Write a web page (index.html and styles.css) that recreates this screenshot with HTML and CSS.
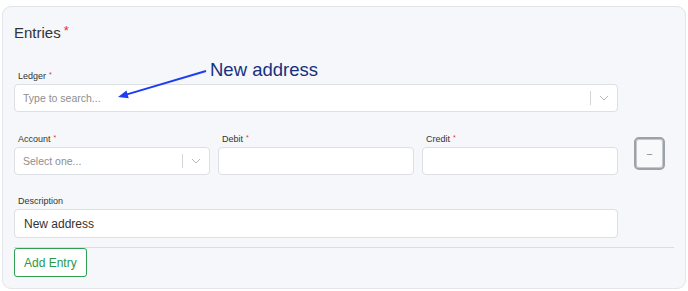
FILE: index.html
```html
<!DOCTYPE html>
<html lang="en">
<head>
    <meta charset="UTF-8">
    <meta name="viewport" content="width=device-width, initial-scale=1.0">
    <title>Entries</title>
    <link rel="stylesheet" href="styles.css">
</head>
<body>
    <div class="card">
        <h2 class="card-title">Entries<span class="req">*</span></h2>

        <div class="field field-wide">
            <label class="field-label">Ledger<span class="req">*</span></label>
            <div class="select">
                <span class="select-value placeholder">Type to search...</span>
                <span class="select-sep"></span>
                <span class="select-arrow">
                    <svg width="10" height="6" viewBox="0 0 10 6"><path d="M1 1l4 4 4-4" fill="none" stroke="#b8b8b8" stroke-width="1"/></svg>
                </span>
            </div>
        </div>

        <div class="entry-row">
            <div class="entry-fields">
                <div class="field">
                    <label class="field-label">Account<span class="req">*</span></label>
                    <div class="select">
                        <span class="select-value placeholder">Select one...</span>
                        <span class="select-sep"></span>
                        <span class="select-arrow">
                            <svg width="10" height="6" viewBox="0 0 10 6"><path d="M1 1l4 4 4-4" fill="none" stroke="#b8b8b8" stroke-width="1"/></svg>
                        </span>
                    </div>
                </div>
                <div class="field">
                    <label class="field-label">Debit<span class="req">*</span></label>
                    <div class="input"></div>
                </div>
                <div class="field">
                    <label class="field-label">Credit<span class="req">*</span></label>
                    <div class="input"></div>
                </div>
            </div>
            <button class="remove-btn" type="button">&minus;</button>
        </div>

        <div class="field field-wide desc">
            <label class="field-label">Description</label>
            <div class="input">New address</div>
        </div>

        <hr class="divider">

        <button class="add-btn" type="button">Add Entry</button>

        <!-- annotation drawn over the form -->
        <div class="note">New address</div>
        <svg class="note-arrow" width="100" height="45" viewBox="0 0 100 45">
            <line x1="96" y1="11" x2="17" y2="34.4" stroke="#1f3df0" stroke-width="2"/>
            <polygon points="8,37 18.7,38.2 16.5,30.4" fill="#1f3df0"/>
        </svg>
    </div>
</body>
</html>
```

FILE: styles.css
```css
* {
    margin: 0;
    padding: 0;
    box-sizing: border-box;
    font-family: 'Liberation Sans', Arial, sans-serif;
}

body {
    background-color: #fff;
    color: #333;
}

.card {
    position: relative;
    width: 684px;
    height: 283px;
    margin: 6px 0 0 2px;
    padding: 17px 11px 11px;
    background-color: #f5f7fa;
    border: 1px solid #e2e5e9;
    border-radius: 9px;
}

.card-title {
    height: 18px;
    font-size: 15px;
    font-weight: normal;
    line-height: 18px;
    color: #333;
}

.req {
    position: relative;
    line-height: 0;
    color: #e03131;
}

.card-title .req {
    top: -3px;
    margin-left: 3px;
    font-size: 13px;
}

.field-label .req {
    top: -2px;
    margin-left: 3px;
    font-size: 7px;
}

.field-wide {
    width: 604px;
}

.field-wide:first-of-type {
    margin-top: 29px;
}

.field-label {
    display: block;
    height: 11px;
    font-size: 9px;
    line-height: 11px;
    margin: 0 0 2px 4px;
    color: #333;
}

.select,
.input {
    display: flex;
    align-items: center;
    height: 28px;
    background-color: #fff;
    border: 1px solid #dcdfe3;
    border-radius: 4px;
}

.select-value {
    flex: 1;
    padding-left: 8px;
    font-size: 10.5px;
}

.placeholder {
    color: #8e8e8e;
}

.select-sep {
    width: 1px;
    height: 14px;
    background-color: #d4d4d4;
}

.select-arrow {
    display: flex;
    padding: 0 8px;
}

.input {
    padding-left: 9px;
    font-size: 12px;
    color: #333;
}

.entry-row {
    display: flex;
    align-items: flex-start;
    gap: 16px;
    margin-top: 22px;
}

.entry-fields {
    display: grid;
    grid-template-columns: repeat(3, 196px);
    gap: 8px;
}

.remove-btn {
    width: 31px;
    height: 33px;
    margin-top: 3px;
    background-color: #f8f9fa;
    border: 2px solid #9da2a7;
    border-radius: 5px;
    box-shadow: inset 0 0 0 1px #c4c8cc;
    color: #8a8a8a;
    font-size: 11px;
}

.desc {
    margin-top: 21px;
}

.desc .input {
    height: 29px;
}

.divider {
    border: none;
    border-top: 1px solid #dadde1;
    margin-top: 9px;
}

.add-btn {
    height: 29px;
    padding: 0 9px;
    background-color: #fff;
    border: 1px solid #2f9e52;
    border-radius: 3px;
    color: #2a9848;
    font-size: 12px;
}

.note {
    position: absolute;
    left: 207px;
    top: 52px;
    font-size: 18.5px;
    line-height: 22px;
    color: #16307e;
}

.note-arrow {
    position: absolute;
    left: 107px;
    top: 53px;
}
```
